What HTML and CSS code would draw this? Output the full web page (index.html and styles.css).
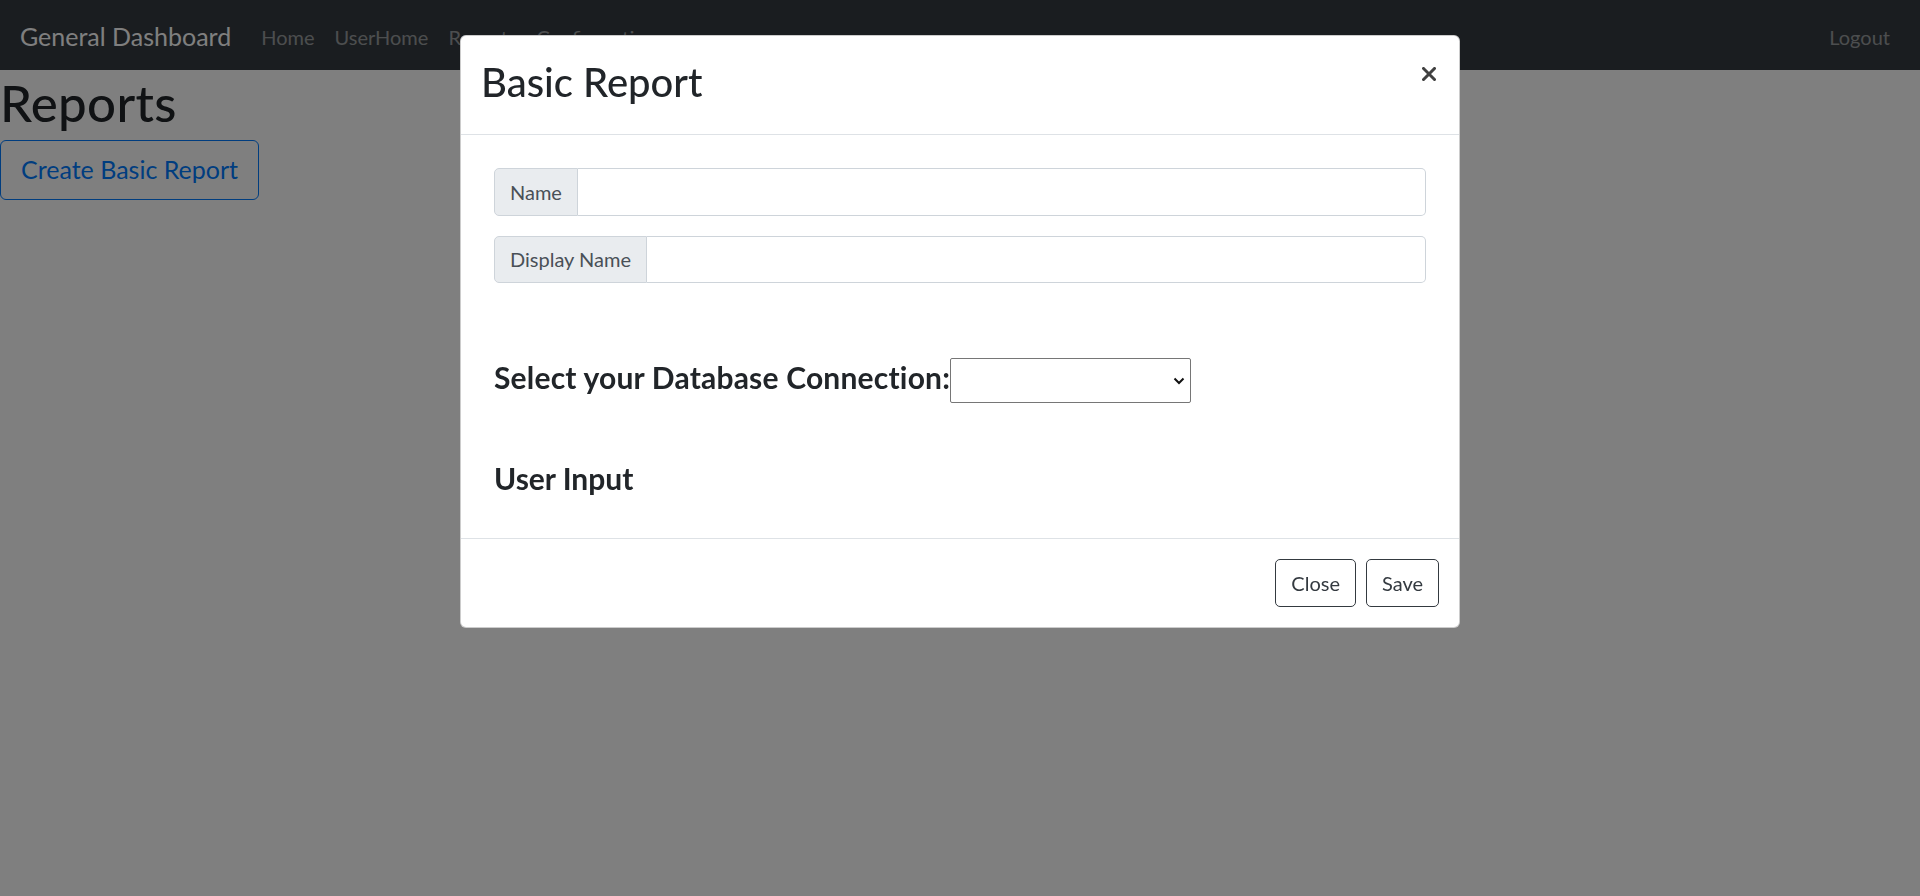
FILE: index.html
```html
<!DOCTYPE html>
<html lang="en">
<head>
<meta charset="utf-8">
<title>Reports</title>
<link rel="stylesheet" href="styles.css">
</head>
<body>
<nav class="navbar">
  <a class="brand" href="#">General Dashboard</a>
  <ul class="nav">
    <li><a class="nav-link" href="#">Home</a></li>
    <li><a class="nav-link" href="#">UserHome</a></li>
    <li><a class="nav-link" href="#">Reports</a></li>
    <li><a class="nav-link dropdown" href="#">Configurations<span class="caret"></span></a></li>
  </ul>
  <ul class="nav nav-right">
    <li><a class="nav-link" href="#">Logout</a></li>
  </ul>
</nav>
<main class="page">
  <h1 class="page-title">Reports</h1>
  <button class="btn-outline-primary" type="button">Create Basic Report</button>
</main>

<div class="backdrop"></div>

<div class="modal">
  <div class="modal-content">
    <div class="modal-header">
      <h2 class="modal-title">Basic Report</h2>
      <button class="close" type="button" aria-label="Close">
        <svg width="14" height="14" viewBox="0 0 14 14"><path d="M1.5 1.5 L12.5 12.5 M12.5 1.5 L1.5 12.5" stroke="#404040" stroke-width="3" stroke-linecap="square" fill="none"/></svg>
      </button>
    </div>
    <div class="modal-body">
      <div class="form-wrap">
        <div class="input-group">
          <span class="input-group-text">Name</span>
          <input class="form-control" type="text">
        </div>
        <div class="input-group">
          <span class="input-group-text">Display Name</span>
          <input class="form-control" type="text">
        </div>
        <div class="db-row">
          <label class="db-label">Select your Database Connection:</label>
          <span class="select-wrap">
            <select class="db-select"></select>
            <svg class="chevron" width="12" height="8" viewBox="0 0 12 8"><path d="M1.5 1.5 L6 6 L10.5 1.5" stroke="#111" stroke-width="2" fill="none"/></svg>
          </span>
        </div>
        <h4 class="section-title">User Input</h4>
      </div>
    </div>
    <div class="modal-footer">
      <button class="btn-outline-dark" type="button">Close</button>
      <button class="btn-outline-dark" type="button">Save</button>
    </div>
  </div>
</div>
</body>
</html>
```
FILE: styles.css
```css
* { box-sizing: border-box; }

html, body {
  margin: 0;
  height: 100%;
}

body {
  font-family: Lato, "Open Sans", sans-serif;
  color: #212529;
  background: #fff;
  font-size: 20px;
  line-height: 1.5;
}

.navbar {
  display: flex;
  align-items: center;
  height: 70px;
  padding: 3px 20px 0;
  background: #343a40;
}

.brand {
  font-size: 25px;
  color: #fff;
  text-decoration: none;
  margin-right: 20px;
  line-height: 1.5;
}

.nav {
  display: flex;
  list-style: none;
  margin: 0;
  padding: 0;
}

.nav-right { margin-left: auto; }

.nav-link {
  display: block;
  padding: 10px 10px;
  font-size: 20px;
  color: rgba(255, 255, 255, 0.5);
  text-decoration: none;
}

.caret {
  display: inline-block;
  margin-left: 6px;
  vertical-align: 4px;
  border-top: 6px solid;
  border-left: 6px solid transparent;
  border-right: 6px solid transparent;
}

.page-title {
  font-size: 51px;
  font-weight: 500;
  line-height: 1.2;
  letter-spacing: 0.3px;
  padding-top: 2px;
  height: 60px;
  margin: 0 0 10px;
}

.btn-outline-primary {
  font-family: inherit;
  font-size: 25px;
  line-height: 1.5;
  padding: 10px 20px;
  height: 60px;
  color: #007bff;
  background: transparent;
  border: 1px solid #007bff;
  border-radius: 6px;
}

.backdrop {
  position: fixed;
  inset: 0;
  background: rgba(0, 0, 0, 0.5);
}

.modal {
  position: fixed;
  top: 35px;
  left: 460px;
  width: 1000px;
}

.modal-content {
  background: #fff;
  border: 1px solid rgba(0, 0, 0, 0.2);
  border-radius: 6px;
}

.modal-header {
  display: flex;
  align-items: flex-start;
  padding: 22px 20px 20px;
  border-bottom: 1px solid #dee2e6;
}

.modal-title {
  font-size: 40px;
  font-weight: 500;
  line-height: 1.2;
  margin: 0 0 8px;
}

.close {
  margin-left: auto;
  margin-top: 9px;
  margin-right: 3px;
  padding: 0;
  background: none;
  border: 0;
  line-height: 0;
}

.modal-body {
  padding: 20px;
}

.form-wrap {
  padding: 13px 13px 0;
}

.input-group {
  display: flex;
  height: 47.5px;
  margin-bottom: 20px;
}

.input-group-text {
  display: flex;
  align-items: center;
  padding: 0 15px;
  font-size: 20px;
  color: #495057;
  background: #e9ecef;
  border: 1px solid #ced4da;
  border-radius: 5px 0 0 5px;
}

.form-control {
  flex: 1;
  min-width: 0;
  font-family: inherit;
  font-size: 20px;
  border: 1px solid #ced4da;
  border-left: 0;
  border-radius: 0 5px 5px 0;
  background: #fff;
}

.db-row {
  display: flex;
  align-items: flex-start;
  margin-top: 75px;
  height: 45px;
}

.db-label {
  font-size: 30px;
  font-weight: 700;
  line-height: 36px;
  letter-spacing: 0.2px;
  margin-top: 1px;
}

.select-wrap {
  position: relative;
  display: block;
}

.db-select {
  display: block;
  width: 241px;
  height: 45px;
  appearance: none;
  -webkit-appearance: none;
  background: #fff;
  border: 1px solid #767676;
  border-radius: 2px;
}

.chevron {
  position: absolute;
  right: 6px;
  top: 19px;
}

.section-title {
  font-size: 30px;
  font-weight: 700;
  line-height: 36px;
  margin: 57px 0 22px;
}

.modal-footer {
  display: flex;
  justify-content: flex-end;
  padding: 15px;
  border-top: 1px solid #dee2e6;
}

.btn-outline-dark {
  margin: 5px;
  height: 47.5px;
  padding: 0 15px;
  font-family: inherit;
  font-size: 20px;
  color: #343a40;
  background: transparent;
  border: 1px solid #343a40;
  border-radius: 5px;
}
```
